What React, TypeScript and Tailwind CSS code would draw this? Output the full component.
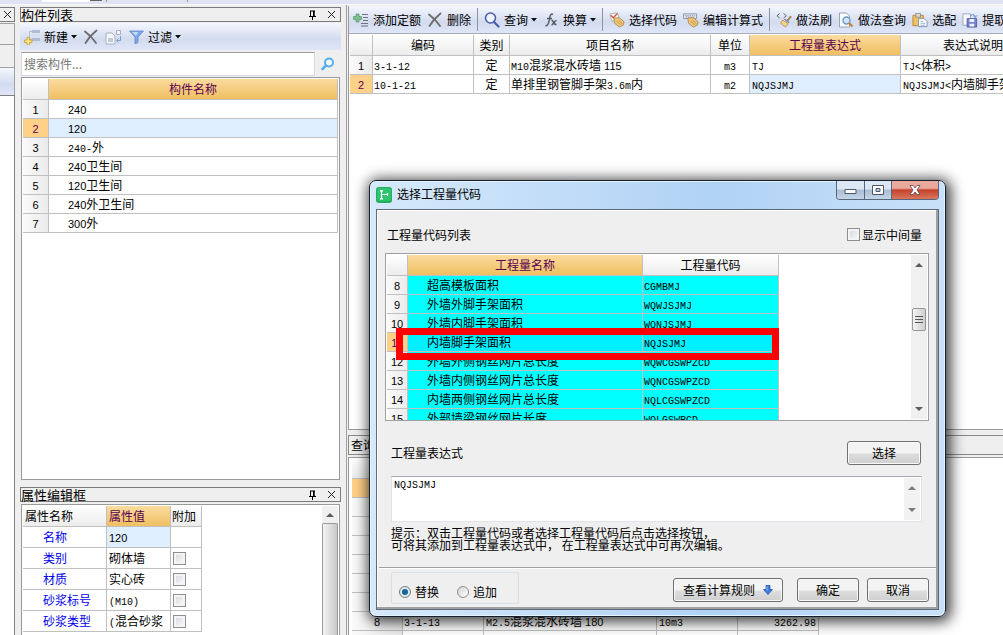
import * as React from 'react';
import clsx from 'clsx';

const TOOLBAR = 'bg-gradient-to-b from-[#f4f7fd] via-[#d3dbef] via-60% to-[#dfe6f8]';
const HEAD = 'bg-gradient-to-b from-white to-[#ececec] font-normal';
const HEAD_ACTIVE = 'bg-gradient-to-b from-[#fadb9e] to-[#f0bf60] font-normal text-[#5a0050]';
const ROW_NO = 'bg-gradient-to-r from-[#fafafa] to-[#ebebeb] text-center font-normal';
const ROW_NO_ACTIVE = 'bg-[#ffd088] text-center font-normal text-[#5a0050]';
const CELL = 'h-[19px] overflow-hidden border-r border-b border-[#c0c0c0] p-0 leading-[18px] whitespace-pre';
const BUTTON =
  'flex h-6 items-center justify-center rounded-[3px] border border-[#707070] bg-gradient-to-b from-[#f3f3f3] from-50% via-[#dddddd] via-55% to-[#cfcfcf] text-xs shadow-[inset_0_0_0_1px_#f8f8f8]';

/** Splits a label so Latin runs keep the half-width pitch next to the full-width glyphs. */
function Txt({ children }: { children: string }) {
  const parts = children.split(/([\x20-\x7e]+)/).filter(Boolean);
  return (
    <>
      {parts.map((part, i) => {
        if (/^[\d ]+$/.test(part)) {
          return <span key={i} className="font-['Liberation_Sans'] text-[11px] leading-none">{part}</span>;
        }
        if (/^[\x20-\x7e]+$/.test(part)) {
          return <span key={i} className="font-['Liberation_Mono'] text-[10px] leading-none">{part}</span>;
        }
        return <React.Fragment key={i}>{part}</React.Fragment>;
      })}
    </>
  );
}

/* ---------- icons ---------- */

function Caret() {
  return (
    <svg width="6" height="4" viewBox="0 0 6 4" className="shrink-0">
      <path d="M0 0h6L3 3.5z" fill="#111" />
    </svg>
  );
}

function PinIcon() {
  return (
    <svg width="9" height="10" viewBox="0 0 9 10">
      <path d="M2 1h5M2.5 1v5M6 1v5M1 6.5h7M4.5 6.5v3.5" stroke="#000" fill="none" />
      <path d="M5 1h1.5v5H5z" />
    </svg>
  );
}

function CloseIcon() {
  return (
    <svg width="9" height="9" viewBox="0 0 9 9">
      <path d="M1 1l7 7M8 1l-7 7" stroke="#222" fill="none" />
    </svg>
  );
}

function NewIcon() {
  return (
    <svg width="16" height="16" viewBox="0 0 16 16">
      <path d="M5.5 2v10M5.5 2.500h3M5.500 10.500h3" stroke="#b6bfce" fill="none" />
      <path d="M8 1h8v3H8zM8 9h8v3H8z" fill="#aebdd3" />
      <path d="M8 5.500h7" stroke="#d8dfeb" />
      <path d="M3 8.500h2.500V11H8v2.500H5.500V16H3v-2.500H.5V11H3z" fill="#ffe784" stroke="#c79a2c" strokeWidth=".8" />
    </svg>
  );
}

function DeleteIcon() {
  return (
    <svg width="16" height="16" viewBox="0 0 16 16">
      <path d="M2 2.500C6 5.500 10 9.500 13 14M13.500 1.500C9 5 5.500 9 2.500 14" stroke="#6b6b6b" strokeWidth="1.800" fill="none" strokeLinecap="round" />
    </svg>
  );
}

function CopyIcon() {
  return (
    <svg width="17" height="16" viewBox="0 0 17 16">
      <path d="M1 4h6l3 3v8H1z" fill="#f4f6fa" stroke="#a7b1c2" />
      <path d="M3 9h5v4H3z" fill="#c2cad8" />
      <path d="M11.500 1.500h4v4h-4z" fill="#f4f6fa" stroke="#a7b1c2" />
      <path d="M15.500 7v4.500H12M13.500 9.500l-2 2 2 2" stroke="#7f9ad0" fill="none" />
    </svg>
  );
}

function FilterIcon() {
  return (
    <svg width="15" height="14" viewBox="0 0 15 14">
      <path d="M.5 1h14L9 7v5.500L6 14V7z" fill="#7fa9e6" stroke="#5d86c8" strokeWidth=".8" />
      <path d="M3 2h6L7 6z" fill="#c2dafa" />
    </svg>
  );
}

function SearchIcon() {
  return (
    <svg width="16" height="16" viewBox="0 0 16 16">
      <circle cx="6.500" cy="6" r="5" fill="#eef5fd" stroke="#4a5cae" strokeWidth="1.600" />
      <path d="M10 10l4.500 4.500" stroke="#4a5cae" strokeWidth="2.200" strokeLinecap="round" />
    </svg>
  );
}

function FindIcon() {
  return (
    <svg width="14" height="14" viewBox="0 0 14 14">
      <circle cx="8" cy="5.500" r="4" fill="#f2f9ff" stroke="#55aee6" strokeWidth="2" />
      <path d="M5 8.500L1.500 12" stroke="#55aee6" strokeWidth="2.500" strokeLinecap="round" />
    </svg>
  );
}

function AddIcon() {
  return (
    <svg width="16" height="16" viewBox="0 0 16 16">
      <path d="M3 2h3v2.500h2.500v3H6V10H3V7.500H.5v-3H3z" fill="#7cbf8c" stroke="#4f8f66" strokeWidth=".6" />
      <path d="M9 2.500h6M10 5.500h5M10 8.500h5M8 11.500h7M8 14h7" stroke="#6d7480" />
    </svg>
  );
}

function FxIcon() {
  return (
    <svg width="16" height="16" viewBox="0 0 16 16">
      <path d="M10 2.500C7.500 1 7 4 6.500 7S5 14.500 2.500 13.500M4 6.500h5M8.500 8.500c2-1 2 5 5 4M13.500 8.500c-2 0-3 4-5 4.500" stroke="#555c66" strokeWidth="1.500" fill="none" />
    </svg>
  );
}

function Hand() {
  return (
    <>
      <path d="M5 6l6-.5 5 4.500-1 3.500-4 2-5-4z" fill="#efc579" stroke="#a57c3a" strokeWidth=".8" />
      <path d="M8 9l4 4M10 8l4 4" stroke="#a57c3a" strokeWidth=".7" />
    </>
  );
}

function SelectCodeIcon() {
  return (
    <svg width="17" height="16" viewBox="0 0 17 16">
      <path d="M1 1.500l8-1 2 6-8 3z" fill="#fff" stroke="#b3b3b3" />
      <path d="M2 3l2.500 2.500L9 1" stroke="#d25545" strokeWidth="1.500" fill="none" />
      <Hand />
    </svg>
  );
}

function EditFormulaIcon() {
  return (
    <svg width="17" height="16" viewBox="0 0 17 16">
      <path d="M.5 1.500h14v5H.5z" fill="#e6ebf3" stroke="#8793a8" />
      <path d="M2 3.500h11M3 5h9" stroke="#7d8ba5" strokeDasharray="1.500 1" />
      <Hand />
    </svg>
  );
}

function BrushIcon() {
  return (
    <svg width="17" height="16" viewBox="0 0 17 16">
      <path d="M4 1L1 3.500 4 6M8 1l3 2.500L8 6" stroke="#5b6270" fill="none" />
      <path d="M16 4l-4 5" stroke="#a27a51" strokeWidth="2" />
      <path d="M7 8l6 4-3 3.500-5-4z" fill="#f3d486" stroke="#ad8a45" strokeWidth=".8" />
      <path d="M9 7l5 4" stroke="#7c8898" strokeWidth="1.500" />
    </svg>
  );
}

function PageFindIcon() {
  return (
    <svg width="16" height="16" viewBox="0 0 16 16">
      <path d="M1.500 1h7l3 3v11h-10z" fill="#f9fbfe" stroke="#9aa6ba" />
      <circle cx="8.500" cy="8.500" r="3.500" fill="#cfe4f7" stroke="#6f9ac4" strokeWidth="1.400" />
      <path d="M11 11l3.500 3.500" stroke="#c58238" strokeWidth="2.200" />
    </svg>
  );
}

function ClipboardIcon() {
  return (
    <svg width="17" height="16" viewBox="0 0 17 16">
      <path d="M1 3h11v11H1z" fill="#eec163" stroke="#b58a35" />
      <path d="M4 1h5v4H4z" fill="#d8d8d8" stroke="#848484" strokeWidth=".8" />
      <path d="M7 6.500h6l3 3V15H7z" fill="#fff" stroke="#8391aa" />
      <path d="M9 9.500h3M9 11.500h5M9 13.500h5" stroke="#8fb0df" />
    </svg>
  );
}

function ExtractIcon() {
  return (
    <svg width="17" height="16" viewBox="0 0 17 16">
      <path d="M1 1.500h8v12H1z" fill="#f9fbfe" stroke="#9aa6ba" />
      <path d="M5.500 6.500h10v9h-10z" fill="#7883cc" stroke="#535da5" />
      <path d="M8 7h5v3H8zM8 12h5v3H8z" fill="#eef0fb" />
      <path d="M9 4c2-3 5-2 5 1M16 3l-2 2.500L12 3" stroke="#5f8ccc" fill="none" />
    </svg>
  );
}

function AppIcon() {
  return (
    <svg width="16" height="16" viewBox="0 0 16 16">
      <rect width="16" height="16" rx="3" fill="#1fae5c" />
      <rect x="1" y="1" width="14" height="13" rx="2" fill="#2fc46f" />
      <path d="M5.500 4v8M5.500 7.500h6M11.500 6v3" stroke="#fff" strokeWidth="1.200" fill="none" />
      <path d="M4 3h3v1.500H4zM4 11h3v1.500H4z" fill="#fff" />
    </svg>
  );
}

function DownArrowIcon() {
  return (
    <svg width="10" height="10" viewBox="0 0 10 10">
      <path d="M3 .5h4v4h2.500L5 9.500.5 4.500H3z" fill="#3f7be0" stroke="#2450a8" strokeWidth=".8" />
      <path d="M4 1.500v4" stroke="#9cc2ff" />
    </svg>
  );
}

function ScrollArrow({ up }: { up?: boolean }) {
  return (
    <svg width="8" height="4" viewBox="0 0 8 4">
      <path d={up ? 'M0 4h8L4 0z' : 'M0 0h8L4 4z'} fill="#5c5c5c" />
    </svg>
  );
}

/* ---------- shared pieces ---------- */

function PanelTitle({ title }: { title: string }) {
  return (
    <div className="flex h-[15px] shrink-0 items-center border border-[#7a7a7a] bg-[#efefef] pr-1">
      <h2 className="flex-1 text-[13px] leading-[13px]">{title}</h2>
      <button aria-label="固定" className="mr-2.5"><PinIcon /></button>
      <button aria-label="关闭"><CloseIcon /></button>
    </div>
  );
}

function ToolItem({ icon, label, menu }: { icon: React.ReactNode; label: string; menu?: boolean }) {
  return (
    <button className="flex shrink-0 items-center gap-1 whitespace-nowrap">
      <span className="flex w-4 justify-center">{icon}</span>
      <span className="flex items-center gap-[3px]">
        {label}
        {menu && <Caret />}
      </span>
    </button>
  );
}

function Divider() {
  return <span className="h-[23px] w-px shrink-0 bg-[#8e93a0]" />;
}

function CheckBox({ id, label }: { id: string; label?: string }) {
  return (
    <input
      id={id}
      type="checkbox"
      aria-label={label}
      className="block size-[13px] appearance-none border border-[#8e8f8f] bg-gradient-to-br from-[#cfd3da] to-white shadow-[inset_0_0_0_2px_#f4f4f4] checked:bg-[#3c7fb1]"
    />
  );
}

/* ---------- left column ---------- */

const COMPONENTS = ['240', '120', '240-外', '240卫生间', '120卫生间', '240外卫生间', '300外'];

function ComponentPanel() {
  return (
    <section className="flex h-[473px] shrink-0 flex-col">
      <PanelTitle title="构件列表" />
      <div className={clsx('mt-px flex h-[27px] shrink-0 items-center pl-1 text-xs', TOOLBAR)}>
        <ToolItem icon={<NewIcon />} label="新建" menu />
        <button aria-label="删除" className="ml-[6px]"><DeleteIcon /></button>
        <button aria-label="复制" className="ml-[6px]"><CopyIcon /></button>
        <span className="ml-[6px]"><ToolItem icon={<FilterIcon />} label="过滤" menu /></span>
      </div>
      <div className="flex h-[27px] shrink-0 items-center gap-1.5 pl-px">
        <input
          type="text"
          aria-label="搜索构件"
          placeholder="搜索构件..."
          className="h-6 min-w-0 flex-1 border border-[#d5d9e6] border-t-[#9a9a9a] bg-white px-0.5 text-xs placeholder:text-[#777]"
        />
        <button aria-label="搜索" className="mr-[6px]"><FindIcon /></button>
      </div>
      <div className="mx-px flex-1 border border-[#9a9a9a] bg-white p-px">
        <table className="w-full table-fixed border-separate border-spacing-0 text-xs">
          <colgroup>
            <col className="w-[26px]" />
            <col />
          </colgroup>
          <thead>
            <tr>
              <th className={clsx('h-[21px] border-r border-b border-[#c0c0c0] p-0', HEAD)} />
              <th className={clsx('h-[21px] border-r border-b border-[#c0c0c0] p-0', HEAD_ACTIVE)}>构件名称</th>
            </tr>
          </thead>
          <tbody>
            {COMPONENTS.map((name, i) => (
              <tr key={name}>
                <th className={clsx(CELL, i === 1 ? ROW_NO_ACTIVE : ROW_NO)}><Txt>{String(i + 1)}</Txt></th>
                <td className={clsx(CELL, 'pl-[19px]', i === 1 && 'bg-[#e0efff]')}><Txt>{name}</Txt></td>
              </tr>
            ))}
          </tbody>
        </table>
      </div>
    </section>
  );
}

const PROPERTIES = [
  { name: '名称', value: '120', extra: false },
  { name: '类别', value: '砌体墙', extra: true },
  { name: '材质', value: '实心砖', extra: true },
  { name: '砂浆标号', value: '(M10)', extra: true },
  { name: '砂浆类型', value: '(混合砂浆', extra: true },
];

function PropertyPanel() {
  return (
    <section className="mt-[7px] flex min-h-0 flex-1 flex-col">
      <PanelTitle title="属性编辑框" />
      <div className="mx-px mt-0.5 flex min-h-0 flex-1 justify-between overflow-hidden border border-b-0 border-[#9a9a9a] bg-white p-px pb-0">
        <table className="h-fit w-[179px] table-fixed border-separate border-spacing-0 text-xs">
          <colgroup>
            <col className="w-[84px]" />
            <col className="w-[64px]" />
            <col className="w-[31px]" />
          </colgroup>
          <thead>
            <tr className="text-left">
              <th className={clsx('h-[21px] border-r border-b border-[#c0c0c0] p-0 pl-0.5', HEAD)}>属性名称</th>
              <th className={clsx('h-[21px] border-r border-b border-[#c0c0c0] p-0 pl-0.5', HEAD_ACTIVE)}>属性值</th>
              <th className={clsx('h-[21px] border-r border-b border-[#c0c0c0] p-0 pl-px whitespace-nowrap', HEAD)}>附加</th>
            </tr>
          </thead>
          <tbody>
            {PROPERTIES.map((p, i) => (
              <tr key={p.name}>
                <th className="h-[21px] border-r border-b border-[#c0c0c0] p-0 pl-5 text-left leading-5 font-normal text-[#0000e8]">{p.name}</th>
                <td className={clsx('h-[21px] overflow-hidden border-r border-b border-[#c0c0c0] p-0 pl-0.5 leading-5 whitespace-nowrap', i === 0 && 'bg-[#e0efff]')}>
                  <Txt>{p.value}</Txt>
                </td>
                <td className="h-[21px] border-r border-b border-[#c0c0c0] p-0 pl-0.5">
                  {p.extra && <CheckBox id={`extra-${i}`} label={`附加 ${p.name}`} />}
                </td>
              </tr>
            ))}
          </tbody>
        </table>
        <div className="flex w-4 flex-col bg-[#f0f0f0]">
          <div className="flex h-[17px] items-center justify-center"><ScrollArrow up /></div>
          <div className="flex-1 rounded-t-xs border border-b-0 border-[#9a9a9a] bg-gradient-to-r from-[#f4f4f4] to-[#c8c8c8]" />
        </div>
      </div>
    </section>
  );
}

/* ---------- right column ---------- */

const QUOTAS = [
  { code: '3-1-12', kind: '定', name: 'M10混浆混水砖墙 115', unit: 'm3', expr: 'TJ', note: 'TJ<体积>' },
  { code: '10-1-21', kind: '定', name: '单排里钢管脚手架3.6m内', unit: 'm2', expr: 'NQJSJMJ', note: 'NQJSJMJ<内墙脚手架面积>' },
];

const QUOTA_HEADS = ['', '编码', '类别', '项目名称', '单位', '工程量表达式', '表达式说明'];

function QuotaPanel() {
  return (
    <section className="flex h-[424px] shrink-0 flex-col overflow-hidden border-b border-l border-[#9a9a9a] bg-white">
      <div className={clsx('flex h-7 shrink-0 items-center gap-[6px] border-b border-[#a8acb8] pl-1 text-xs', TOOLBAR)}>
        <ToolItem icon={<AddIcon />} label="添加定额" />
        <ToolItem icon={<DeleteIcon />} label="删除" />
        <Divider />
        <ToolItem icon={<SearchIcon />} label="查询" menu />
        <ToolItem icon={<FxIcon />} label="换算" menu />
        <Divider />
        <ToolItem icon={<SelectCodeIcon />} label="选择代码" />
        <ToolItem icon={<EditFormulaIcon />} label="编辑计算式" />
        <Divider />
        <ToolItem icon={<BrushIcon />} label="做法刷" />
        <ToolItem icon={<PageFindIcon />} label="做法查询" />
        <ToolItem icon={<ClipboardIcon />} label="选配" />
        <ToolItem icon={<ExtractIcon />} label="提取" />
      </div>
      <table className="mt-px ml-px w-[696px] table-fixed border-separate border-spacing-0 text-xs">
        <colgroup>
          <col className="w-[23px]" />
          <col className="w-[101px]" />
          <col className="w-[36px]" />
          <col className="w-[201px]" />
          <col className="w-[39px]" />
          <col className="w-[151px]" />
          <col className="w-[145px]" />
        </colgroup>
        <thead>
          <tr>
            {QUOTA_HEADS.map((h, i) => (
              <th key={i} className={clsx('h-[21px] border-r border-b border-[#c0c0c0] p-0', i === 5 ? HEAD_ACTIVE : HEAD)}>{h}</th>
            ))}
          </tr>
        </thead>
        <tbody>
          {QUOTAS.map((q, i) => (
            <tr key={q.code}>
              <th className={clsx(CELL, i === 1 ? ROW_NO_ACTIVE : ROW_NO)}><Txt>{String(i + 1)}</Txt></th>
              <td className={clsx(CELL, 'pl-px')}><Txt>{q.code}</Txt></td>
              <td className={clsx(CELL, 'text-center')}>{q.kind}</td>
              <td className={clsx(CELL, 'pl-px')}><Txt>{q.name}</Txt></td>
              <td className={clsx(CELL, 'text-center')}><Txt>{q.unit}</Txt></td>
              <td className={clsx(CELL, 'pl-0.5', i === 1 && 'bg-[#e0efff]')}><Txt>{q.expr}</Txt></td>
              <td className={clsx(CELL, 'pl-0.5')}><Txt>{q.note}</Txt></td>
            </tr>
          ))}
        </tbody>
      </table>
    </section>
  );
}

const MATCHES = [
  ['1', '', '', '', ''],
  ['2', '', '', '', ''],
  ['3', '', '', '', ''],
  ['4', '', '', '', ''],
  ['5', '', '', '', ''],
  ['6', '', '', '', ''],
  ['7', '', '', '', ''],
  ['8', '3-1-13', 'M2.5混浆混水砖墙 180', '10m3', '3262.98'],
  ['', '', '', '', ''],
];

function QueryPanel() {
  return (
    <section className="mt-[5px] flex min-h-0 flex-1 flex-col overflow-hidden">
      <div className="flex h-5 shrink-0 items-center border border-r-0 border-[#8a8a8a] bg-[#efefef] pl-0.5">
        <h2 className="text-xs">查询</h2>
      </div>
      <div className="mt-0.5 min-h-0 flex-1 overflow-hidden border-t border-l border-[#9a9a9a] bg-white pl-[3px]">
        <table className="w-[467px] table-fixed border-separate border-spacing-0 text-xs">
          <colgroup>
            <col className="w-[51px]" />
            <col className="w-[81px]" />
            <col className="w-[173px]" />
            <col className="w-[81px]" />
            <col className="w-[81px]" />
          </colgroup>
          <thead>
            <tr>
              {['', '编码', '名称', '单位', '单价'].map((h) => (
                <th key={h} className={clsx('h-[21px] border-r border-b border-[#c0c0c0] p-0', HEAD)}>{h}</th>
              ))}
            </tr>
          </thead>
          <tbody>
            {MATCHES.map(([no, code, name, unit, price], i) => (
              <tr key={i}>
                <th className={clsx(CELL, i === 0 ? ROW_NO_ACTIVE : ROW_NO)}><Txt>{no}</Txt></th>
                <td className={clsx(CELL, 'pl-px')}><Txt>{code}</Txt></td>
                <td className={clsx(CELL, 'pl-0.5')}><Txt>{name}</Txt></td>
                <td className={clsx(CELL, 'pl-0.5')}><Txt>{unit}</Txt></td>
                <td className={clsx(CELL, 'pr-0.5 text-right')}><Txt>{price}</Txt></td>
              </tr>
            ))}
          </tbody>
        </table>
      </div>
    </section>
  );
}

/* ---------- dialog ---------- */

const CODES = [
  { no: 8, name: '超高模板面积', code: 'CGMBMJ' },
  { no: 9, name: '外墙外脚手架面积', code: 'WQWJSJMJ' },
  { no: 10, name: '外墙内脚手架面积', code: 'WQNJSJMJ' },
  { no: 11, name: '内墙脚手架面积', code: 'NQJSJMJ' },
  { no: 12, name: '外墙外侧钢丝网片总长度', code: 'WQWCGSWPZCD' },
  { no: 13, name: '外墙内侧钢丝网片总长度', code: 'WQNCGSWPZCD' },
  { no: 14, name: '内墙两侧钢丝网片总长度', code: 'NQLCGSWPZCD' },
  { no: 15, name: '外部墙梁钢丝网片长度', code: 'WQLGSWPCD' },
];

function CodeTable() {
  return (
    <div className="relative mr-[9px] ml-2 h-[168px]">
      <div className="flex h-full justify-between overflow-hidden border border-[#a0a0a0] bg-white p-px">
        <table className="h-fit w-[392px] table-fixed border-separate border-spacing-0 text-xs">
          <colgroup>
            <col className="w-[21px]" />
            <col className="w-[235px]" />
            <col className="w-[136px]" />
          </colgroup>
          <thead>
            <tr>
              <th className={clsx('h-[21px] border-r border-b border-[#c0c0c0] p-0', HEAD)} />
              <th className={clsx('h-[21px] border-r border-b border-[#c0c0c0] p-0', HEAD_ACTIVE)}>工程量名称</th>
              <th className={clsx('h-[21px] border-r border-b border-[#c0c0c0] p-0', HEAD)}>工程量代码</th>
            </tr>
          </thead>
          <tbody>
            {CODES.map((c) => (
              <tr key={c.no} className={c.no === 11 ? 'bg-[#00f0ff]' : 'bg-[#00ffff]'}>
                <th className={clsx(CELL, c.no === 11 ? ROW_NO_ACTIVE : ROW_NO)}><Txt>{String(c.no)}</Txt></th>
                <td className={clsx(CELL, 'pl-[19px]')}>{c.name}</td>
                <td className={clsx(CELL, 'pl-px')}><Txt>{c.code}</Txt></td>
              </tr>
            ))}
          </tbody>
        </table>
        <div className="flex w-4 flex-col items-center justify-between bg-[#f0f0f0] py-2">
          <ScrollArrow up />
          <div className="mb-9 flex h-[23px] w-[14px] flex-col items-center justify-center gap-0.5 rounded-xs border border-[#979797] bg-gradient-to-r from-[#f4f4f4] to-[#cfcfcf]">
            <span className="h-px w-2 bg-[#555]" />
            <span className="h-px w-2 bg-[#555]" />
            <span className="h-px w-2 bg-[#555]" />
          </div>
          <ScrollArrow />
        </div>
      </div>
      {/* marker around the chosen code */}
      <div className="pointer-events-none absolute top-[75px] left-[11px] h-[32px] w-[383px] border-7 border-[#ff0000]" />
    </div>
  );
}

function CaptionButtons() {
  return (
    <div className="flex h-[19px] overflow-hidden rounded-b-[4px] border border-t-0 border-[#56677d]">
      <button aria-label="最小化" className="flex w-7 items-center justify-center border-r border-[#56677d] bg-gradient-to-b from-[#dbe7f4] from-45% via-[#a9bdd3] via-50% to-[#c4d5e8] pt-1">
        <svg width="13" height="6" viewBox="0 0 13 6"><path d="M1 .5h11v4H1z" fill="#fff" stroke="#535666" /></svg>
      </button>
      <button aria-label="最大化" className="flex w-[27px] items-center justify-center border-r border-[#56677d] bg-gradient-to-b from-[#dbe7f4] from-45% via-[#a9bdd3] via-50% to-[#c4d5e8]">
        <svg width="12" height="10" viewBox="0 0 12 10"><path d="M.5.5h11v9H.5zM4 3.500v3h4v-3z" fill="#fff" fillRule="evenodd" stroke="#535666" /></svg>
      </button>
      <button aria-label="关闭" className="flex w-[46px] items-center justify-center bg-gradient-to-b from-[#e9a99d] from-40% via-[#c4402b] via-50% to-[#d9765c]">
        <svg width="12" height="10" viewBox="0 0 12 10">
          <path d="M1 .5h3l2 2.500L8 .5h3L8 5l3 4.500H8L6 7 4 9.500H1L4 5z" fill="#fff" stroke="#5b4452" strokeWidth=".8" />
        </svg>
      </button>
    </div>
  );
}

function CodeDialog() {
  const [mode, setMode] = React.useState('replace');
  const radio =
    'size-3 appearance-none rounded-full border border-[#8e8f8f] bg-gradient-to-br from-[#d0d4da] to-white checked:border-[3px] checked:border-[#e2e6ea] checked:bg-[#14679c] checked:bg-none checked:outline checked:outline-[#767d85] checked:-outline-offset-1';
  return (
    <div
      role="dialog"
      aria-label="选择工程量代码"
      className="absolute top-[180px] left-[369px] w-[577px] rounded-[7px] border border-[#14202e] bg-gradient-to-r from-[#d6e9fb] via-[#b0d2f5] via-60% to-[#c9e1f8] px-[6px] pb-[6px] shadow-[2px_2px_14px_3px_rgba(0,0,0,0.75),inset_0_0_0_1px_#e6f3ff]"
    >
      <div className="flex h-7 items-start">
        <span className="mt-[6px] mr-[5px]"><AppIcon /></span>
        <h1 className="flex-1 pt-[5px] text-xs leading-4">选择工程量代码</h1>
        <CaptionButtons />
      </div>
      <div className="border border-[#5c6b7c] bg-[#efefef] shadow-[inset_-2px_-2px_0_#a0a0a0,inset_1px_1px_0_#fff]">
        <div className="flex h-[43px] items-center justify-between pt-1.5 pr-4 pl-2.5 text-xs">
          <h2>工程量代码列表</h2>
          <div className="flex items-center gap-0.5">
            <CheckBox id="show-middle" />
            <label htmlFor="show-middle">显示中间量</label>
          </div>
        </div>
        <CodeTable />
        <div className="flex h-[55px] items-center justify-between pt-2 pr-[17px] pl-3.5 text-xs">
          <label htmlFor="expression">工程量表达式</label>
          <button className={clsx(BUTTON, 'w-[74px]')}>选择</button>
        </div>
        <div className="mr-4 ml-3.5 flex h-[46px] border border-[#dfe3ea] border-t-[#a5a8b0] bg-white p-px">
          <textarea
            id="expression"
            defaultValue="NQJSJMJ"
            className="min-w-0 flex-1 resize-none overflow-hidden px-px font-['Liberation_Mono'] text-[10px] leading-4 outline-none"
          />
          <div className="flex w-4 flex-col items-center justify-between bg-[#f0f0f0] py-2 opacity-80">
            <ScrollArrow up />
            <ScrollArrow />
          </div>
        </div>
        <p className="mt-[5px] ml-3.5 text-xs leading-3">
          提示：双击工程量代码或者选择工程量代码后点击选择按钮，
          <br />
          可将其添加到工程量表达式中， 在工程量表达式中可再次编辑。
        </p>
        <div className="mx-0.5 mt-4 flex h-[42px] items-start justify-between border-t border-[#a0a0a0] pt-1 pr-[7px] pl-3 text-xs shadow-[inset_0_1px_0_#fff]">
          <div className="flex h-8 w-32 items-center gap-[18px] rounded-xs border border-[#d5dfe8] pt-2 pl-[7px]">
            <label className="flex items-center gap-1">
              <input type="radio" name="mode" className={radio} checked={mode === 'replace'} onChange={() => setMode('replace')} />
              替换
            </label>
            <label className="flex items-center gap-1">
              <input type="radio" name="mode" className={radio} checked={mode === 'append'} onChange={() => setMode('append')} />
              追加
            </label>
          </div>
          <div className="flex gap-2 pt-[6px]">
            <button className={clsx(BUTTON, 'mr-1.5 w-[110px] gap-2')}>查看计算规则 <DownArrowIcon /></button>
            <button className={clsx(BUTTON, 'w-[62px]')}>确定</button>
            <button className={clsx(BUTTON, 'w-[62px]')}>取消</button>
          </div>
        </div>
      </div>
    </div>
  );
}

export default function App() {
  return (
    <div className="relative flex h-screen flex-col overflow-hidden bg-[#efefef] font-['Noto_Sans_CJK_SC',sans-serif] text-black">
      <div className="flex h-[5px] shrink-0 items-start border-b border-[#f6f6f6] bg-[#dfe3f2]">
        <span className="ml-[42px] h-0.5 w-12 bg-white" />
        <span className="h-px w-3 bg-[#666]" />
        <span className="ml-1 h-0.5 w-px bg-[#999]" />
        <span className="ml-20 h-0.5 w-px bg-[#999]" />
      </div>
      <div className="flex min-h-0 flex-1">
        <aside className="mt-0.5 flex w-[15px] shrink-0 flex-col">
          <button aria-label="关闭" className="flex h-[15px] items-center justify-center border border-l-0 border-[#7a7a7a]"><CloseIcon /></button>
          <div className="mt-px h-[22px] border border-l-0 border-[#a0a0a0]" />
          <div className="h-[23px] border-r border-b border-[#a0a0a0]" />
          <div className={clsx('h-[27px] border-r border-[#a0a0a0]', TOOLBAR)} />
          <div className="flex-1 border-t border-r border-[#808080] bg-white" />
        </aside>
        <div className="mt-0.5 ml-[5px] flex w-[321px] shrink-0 flex-col">
          <ComponentPanel />
          <PropertyPanel />
        </div>
        <div className="ml-[5px] w-px shrink-0 bg-[#a0a0a0]" />
        <main className="mt-px ml-px flex min-w-0 flex-1 flex-col">
          <QuotaPanel />
          <QueryPanel />
        </main>
      </div>
      <CodeDialog />
    </div>
  );
}
